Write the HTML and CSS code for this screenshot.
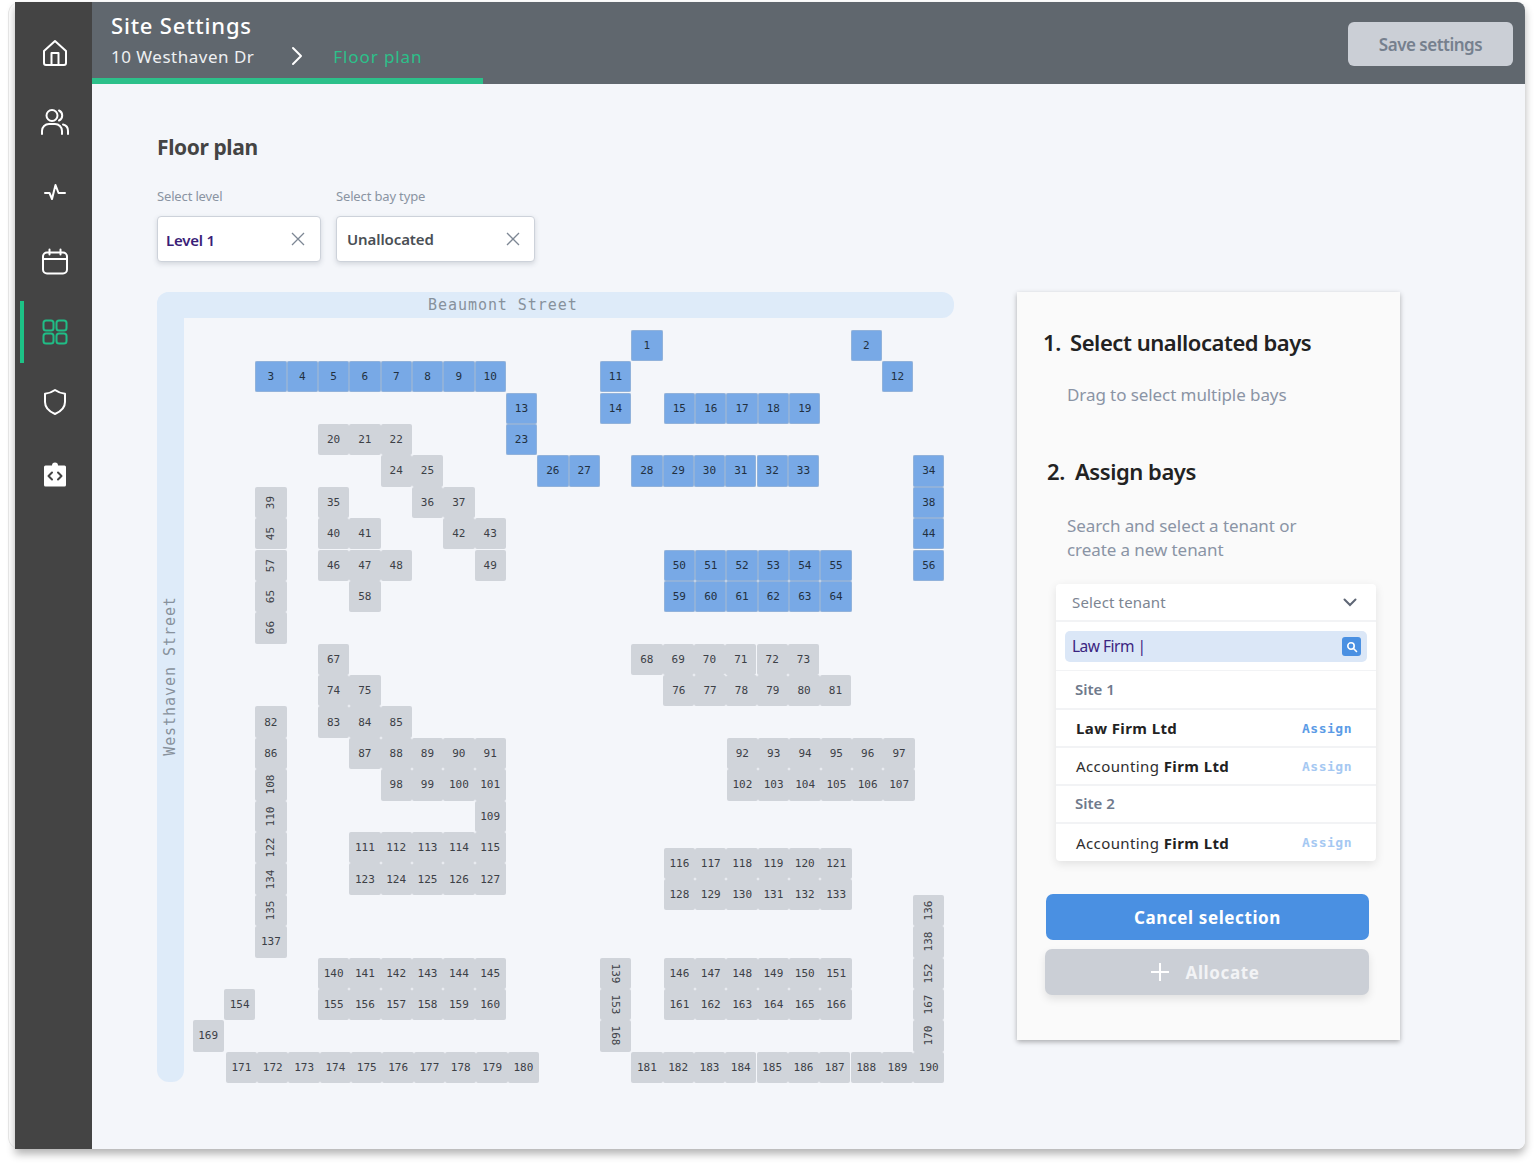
FILE: index.html
```html
<!DOCTYPE html>
<html lang="en">
<head>
<meta charset="UTF-8">
<meta name="viewport" content="width=device-width, initial-scale=1.0">
<title>Site Settings - Floor plan</title>
<link rel="stylesheet" href="styles.css">
</head>
<body>
<div class="frame">
  <div class="app">
    <nav class="sidebar">
      <a class="nav-item home">
        <svg viewBox="0 0 26 28" width="26" height="28"><path d="M2 12 13 2l11 10v12a2 2 0 0 1-2 2H4a2 2 0 0 1-2-2z"/><path d="M9.500 26V14h7v12"/></svg>
      </a>
      <a class="nav-item">
        <svg viewBox="0 0 30 28" width="30" height="28"><circle cx="12" cy="7.500" r="5.500"/><path d="M2 26v-3a7 7 0 0 1 7-7h6a7 7 0 0 1 7 7v3"/><path d="M19 2.500a5.500 5.500 0 0 1 0 10"/><path d="M23 16.500a6.500 6.500 0 0 1 5 6.500v3"/></svg>
      </a>
      <a class="nav-item">
        <svg viewBox="0 0 24 18" width="24" height="18"><path d="M2 10h4.500l2.500 6 3.500-14 3 8h6.500"/></svg>
      </a>
      <a class="nav-item">
        <svg viewBox="0 0 28 28" width="28" height="28"><rect x="2" y="4.500" width="24" height="21" rx="4"/><path d="M2 11h24M8.500 1.500v5M19.500 1.500v5"/></svg>
      </a>
      <a class="nav-item active">
        <svg viewBox="0 0 26 26" width="26" height="26"><rect x="1.500" y="1.500" width="10" height="10" rx="2.500"/><rect x="14.500" y="1.500" width="10" height="10" rx="2.500"/><rect x="1.500" y="14.500" width="10" height="10" rx="2.500"/><rect x="14.500" y="14.500" width="10" height="10" rx="2.500"/></svg>
      </a>
      <a class="nav-item">
        <svg viewBox="0 0 24 28" width="24" height="28"><path d="M12 2c3 2.200 6 3.300 10 3.700V14c0 5.500-4 9.500-10 12C6 23.500 2 19.500 2 14V5.700C6 5.300 9 4.200 12 2z"/></svg>
      </a>
      <a class="nav-item code">
        <svg viewBox="0 0 22 25" width="22" height="25"><path class="solid" d="M1.500 3.500H8a3 3 0 0 1 6 0h6.500a1.500 1.500 0 0 1 1.500 1.500v18a1.500 1.500 0 0 1-1.500 1.500h-19A1.500 1.500 0 0 1 0 23V5a1.500 1.500 0 0 1 1.500-1.500z"/><path class="cut" d="M8 10.500 4.500 14 8 17.500M14 10.500l3.500 3.500-3.500 3.500"/></svg>
      </a>
    </nav>

    <div class="page">
      <header class="topbar">
        <div class="crumbs">
          <div class="site-title">Site Settings</div>
          <div class="crumb-line">
            <span class="crumb">10 Westhaven Dr</span>
            <svg class="crumb-arrow" viewBox="0 0 12 20" width="12" height="20"><path d="M2 2l8 8-8 8"/></svg>
            <span class="crumb current">Floor plan</span>
          </div>
        </div>
        <button class="save-button">Save settings</button>
      </header>

      <main class="content">
        <h1>Floor plan</h1>
        <div class="filters">
          <div class="filter">
            <label>Select level</label>
            <div class="select level-select">
              <span class="level-value">Level 1</span>
              <svg viewBox="0 0 16 16" width="16" height="16"><path d="M2 2l12 12M14 2 2 14"/></svg>
            </div>
          </div>
          <div class="filter">
            <label>Select bay type</label>
            <div class="select type-select">
              <span class="type-value">Unallocated</span>
              <svg viewBox="0 0 16 16" width="16" height="16"><path d="M2 2l12 12M14 2 2 14"/></svg>
            </div>
          </div>
        </div>

        <div class="plan-row">
          <div class="map" id="map">
            <div class="street street-top">Beaumont Street</div>
            <div class="street street-left"><span>Westhaven Street</span></div>
          </div>

          <aside class="panel">
            <h2 class="step-one"><span>1.</span> Select unallocated bays</h2>
            <p class="hint hint-one">Drag to select multiple bays</p>
            <h2 class="step-two"><span>2.</span> Assign bays</h2>
            <p class="hint hint-two">Search and select a tenant or<br>create a new tenant</p>

            <div class="tenant-box">
              <div class="tenant-select">
                <span>Select tenant</span>
                <svg viewBox="0 0 14 9" width="14" height="9"><path d="M1.500 1.500 7 7l5.500-5.500"/></svg>
              </div>
              <div class="search-row">
                <div class="search-input">
                  <span class="search-text">Law Firm |</span>
                  <span class="search-icon">
                    <svg viewBox="0 0 12 12" width="12" height="12"><circle cx="5" cy="5" r="3.200"/><path d="M7.500 7.500 10.500 10.500"/></svg>
                  </span>
                </div>
              </div>
              <div class="tenant-row site-row first">Site 1</div>
              <div class="tenant-row"><span class="name"><b>Law Firm Ltd</b></span><a class="assign strong">Assign</a></div>
              <div class="tenant-row"><span class="name">Accounting <b>Firm Ltd</b></span><a class="assign">Assign</a></div>
              <div class="tenant-row site-row">Site 2</div>
              <div class="tenant-row last"><span class="name">Accounting <b>Firm Ltd</b></span><a class="assign">Assign</a></div>
            </div>

            <button class="wide-button cancel">Cancel selection</button>
            <button class="wide-button allocate">
              <svg viewBox="0 0 20 20" width="20" height="20"><path d="M10 1v18M1 10h18"/></svg>
              Allocate
            </button>
          </aside>
        </div>
      </main>
    </div>
  </div>
</div>
<script src="map.js"></script>
</body>
</html>
```

FILE: styles.css
```css
* {
  box-sizing: border-box;
}
body {
  margin: 0;
  background-color: #fff;
  font-family: 'Noto Sans', sans-serif;
  color: #444;
}
.frame {
  margin: 2px 9px 17px 8px;
  padding-left: 6px;
  border-left: 1px solid #e8e8e8;
  border-radius: 12px 0 0 12px;
}
.app {
  display: flex;
  height: 1147px;
  border-radius: 0 8px 8px 0;
  overflow: hidden;
  box-shadow: 0 5px 8px rgba(0, 0, 0, 0.3);
}

/* sidebar */
.sidebar {
  width: 77px;
  flex: none;
  padding: 15px 0 0 3px;
  background-color: #444;
}
.nav-item {
  position: relative;
  display: flex;
  height: 70px;
  align-items: center;
  justify-content: center;
}
.nav-item.home svg {
  margin-top: 2px;
}
.nav-item.code svg {
  margin-top: 4px;
}
.nav-item svg {
  fill: none;
  stroke: #fff;
  stroke-width: 2;
  stroke-linecap: round;
  stroke-linejoin: round;
}
.nav-item .solid {
  fill: #fff;
  stroke: none;
}
.nav-item .cut {
  stroke: #444;
  stroke-width: 2;
}
.nav-item.active svg {
  stroke: #20bd86;
}
.nav-item.active::before {
  content: '';
  position: absolute;
  left: 2px;
  top: 4px;
  width: 4px;
  height: 62px;
  background-color: #1dc286;
}

/* top bar */
.page {
  flex: 1;
  display: flex;
  flex-direction: column;
  min-width: 0;
}
.topbar {
  display: flex;
  height: 82px;
  flex: none;
  align-items: flex-start;
  justify-content: space-between;
  padding-right: 12px;
  background-color: #60676e;
}
.crumbs {
  width: 391px;
  height: 82px;
  padding: 8px 0 0 19px;
  border-bottom: 6px solid #2cc08a;
}
.site-title {
  font-size: 22px;
  line-height: 30px;
  font-weight: 500;
  letter-spacing: 0.8px;
  color: #fff;
}
.crumb-line {
  display: flex;
  align-items: center;
  margin-top: 3px;
  height: 26px;
}
.crumb {
  font-size: 17px;
  letter-spacing: 0.5px;
  color: #eef0f2;
}
.crumb.current {
  letter-spacing: 0.9px;
  color: #2cc08a;
}
.crumb-arrow {
  margin: 0 30px 0 37px;
  fill: none;
  stroke: #fff;
  stroke-width: 2;
  stroke-linecap: round;
  stroke-linejoin: round;
}
.save-button {
  width: 165px;
  height: 44px;
  margin-top: 20px;
  border: none;
  border-radius: 6px;
  background-color: #cbcfd6;
  color: #76808e;
  font-family: inherit;
  font-size: 17px;
  font-weight: 600;
  letter-spacing: -0.5px;
}

/* floor plan page */
.content {
  flex: 1;
  padding: 48px 0 0 65px;
  background-color: #f4f6fa;
}
h1 {
  margin: 0;
  font-size: 21px;
  line-height: 30px;
  font-weight: 700;
  letter-spacing: -0.4px;
  color: #444;
}
.filters {
  display: flex;
  gap: 15px;
  margin-top: 25px;
}
.filter label {
  display: block;
  font-size: 13px;
  line-height: 18px;
  letter-spacing: -0.15px;
  color: #8a94a2;
}
.select {
  display: flex;
  height: 46px;
  margin-top: 11px;
  align-items: center;
  justify-content: space-between;
  padding: 0 14px 0 8px;
  border: 1px solid #cdd2da;
  border-radius: 4px;
  background-color: #fff;
  box-shadow: 0 2px 5px rgba(60, 70, 90, 0.18);
}
.select svg {
  fill: none;
  stroke: #7d8794;
  stroke-width: 1.3;
}
.level-select {
  width: 164px;
}
.type-select {
  width: 199px;
  padding-left: 10px;
  padding-right: 13px;
}
.level-value {
  margin-top: 2px;
  font-size: 15px;
  font-weight: 600;
  letter-spacing: -0.2px;
  color: #3a1e78;
}
.type-value {
  font-size: 15px;
  font-weight: 600;
  letter-spacing: -0.1px;
  color: #4a4f55;
}
.plan-row {
  display: flex;
  gap: 63px;
  margin-top: 30px;
}

/* map canvas */
.map {
  position: relative;
  width: 797px;
  height: 790px;
  flex: none;
  font-family: 'DejaVu Sans Mono', monospace;
}
.street {
  position: absolute;
  background-color: #deebf9;
  color: #87919c;
}
.street-top {
  left: 0;
  top: 0;
  width: 797px;
  height: 26px;
  padding-left: 271px;
  border-radius: 12px 12px 12px 0;
  font-size: 15px;
  line-height: 27px;
  letter-spacing: 0.95px;
}
.street-left {
  left: 0;
  top: 0;
  width: 27px;
  height: 790px;
  border-radius: 12px 0 12px 12px;
  font-size: 15px;
  letter-spacing: 0.95px;
}
.street-left span {
  position: absolute;
  left: 13px;
  top: 384px;
  white-space: nowrap;
  transform: translate(-50%, -50%) rotate(-90deg);
}
.bay {
  position: absolute;
  display: flex;
  width: 31.400px;
  height: 31.400px;
  align-items: center;
  justify-content: center;
  border-radius: 2px;
  background-color: #d0d4da;
  color: #3c4046;
  font-size: 11px;
}
.bay.allocated {
  background-color: #78a9e6;
  box-shadow: inset 0 0 0 0.5px #a9bbd0;
  color: #22303f;
}
.bay.up span {
  transform: rotate(-90deg);
}
.bay.down span {
  transform: rotate(90deg);
}

/* allocate panel */
.panel {
  width: 383px;
  height: 748px;
  flex: none;
  padding: 35px 24px 0 26px;
  background-color: #fafafa;
  box-shadow: 0 2px 5px rgba(0, 0, 0, 0.3);
}
.panel h2 {
  margin: 0;
  font-size: 22px;
  line-height: 30px;
  font-weight: 600;
  letter-spacing: -0.45px;
  color: #222;
}
.panel h2 span {
  margin-right: 4px;
}
.step-two {
  padding-left: 4px;
}
.hint {
  margin: 0;
  padding-left: 24px;
  font-size: 17px;
  line-height: 24px;
  letter-spacing: -0.08px;
  color: #8a94a5;
}
.hint-one {
  margin-top: 26px;
}
.panel .step-two {
  margin-top: 49px;
}
.panel .step-two span {
  margin-right: 5px;
}
.hint-two {
  margin-top: 28px;
}
.tenant-box {
  width: 320px;
  margin: 22px 0 0 13px;
  border-radius: 4px;
  background-color: #fff;
  box-shadow: 0 3px 10px rgba(0, 0, 0, 0.1);
}
.tenant-select {
  display: flex;
  height: 38px;
  align-items: center;
  justify-content: space-between;
  padding: 0 19px 0 16px;
  border-bottom: 2px solid #f2f3f5;
  font-size: 15px;
  letter-spacing: 0.15px;
  color: #7c8592;
}
.tenant-select svg {
  fill: none;
  stroke: #5e6675;
  stroke-width: 2;
  stroke-linecap: round;
}
.search-row {
  height: 49px;
  padding: 9px 9px 0;
  border-bottom: 1px solid #f2f3f5;
}
.search-input {
  display: flex;
  height: 31px;
  align-items: center;
  justify-content: space-between;
  padding: 0 6px 0 7px;
  border-radius: 5px;
  background-color: #dbe7f7;
  font-size: 15.500px;
  letter-spacing: -0.5px;
  color: #3a2480;
}
.search-text {
  margin-top: -2px;
}
.search-icon {
  display: flex;
  width: 19px;
  height: 19px;
  align-items: center;
  justify-content: center;
  border-radius: 3px;
  background-color: #4a90e2;
}
.search-icon svg {
  fill: none;
  stroke: #fff;
  stroke-width: 1.6;
  stroke-linecap: round;
}
.tenant-row {
  display: flex;
  height: 38px;
  align-items: center;
  justify-content: space-between;
  padding: 0 24px 0 20px;
  border-bottom: 2px solid #f2f3f5;
  font-size: 15px;
  letter-spacing: 0.4px;
  color: #2e2e2e;
}
.tenant-row.first {
  height: 39px;
}
.tenant-row.last {
  height: 37px;
  border-bottom: none;
}
.tenant-row b {
  font-weight: 700;
  color: #222;
}
.site-row {
  padding-left: 19px;
  padding-bottom: 2px;
  font-weight: 600;
  letter-spacing: 0;
  color: #6f7a8c;
}
.assign {
  font-size: 13px;
  font-weight: 600;
  font-family: 'DejaVu Sans Mono', monospace;
  letter-spacing: 0.5px;
  color: #a5c8f2;
}
.assign.strong {
  color: #5b9be6;
}
.wide-button {
  display: flex;
  width: 323px;
  height: 46px;
  align-items: center;
  justify-content: center;
  gap: 16px;
  margin-left: 3px;
  border: none;
  border-radius: 7px;
  font-family: inherit;
  font-size: 17px;
  font-weight: 700;
  letter-spacing: 0.6px;
  color: #fff;
}
.cancel {
  margin-top: 33px;
  background-color: #4a90e2;
}
.allocate {
  width: 324px;
  margin-top: 9px;
  margin-left: 2px;
  padding-right: 11px;
  background-color: #cbcfd6;
  box-shadow: 0 4px 8px rgba(0, 0, 0, 0.1);
  color: #f2f3f5;
}
.allocate svg {
  fill: none;
  stroke: #fff;
  stroke-width: 2;
}
```

FILE: map.js
```js
// bays: centre of column 0 / row 0, measured from the map's top left corner
const COL_PITCH = 31.33;
const ROW_PITCH = 31.39;
const COL_ZERO = 113.7;
const ROW_ZERO = 53.25;

const map = document.getElementById('map');

function addBay(col, row, label, kind, turn) {
  const bay = document.createElement('div');
  bay.className = 'bay ' + (kind === 'b' ? 'allocated ' : '') + (turn || '');
  bay.style.left = (COL_ZERO + col * COL_PITCH - 15.5).toFixed(1) + 'px';
  bay.style.top = (ROW_ZERO + row * ROW_PITCH - 15.5).toFixed(1) + 'px';
  bay.innerHTML = '<span>' + label + '</span>';
  map.appendChild(bay);
}

// a run of bays with numbers following on: col, row, first, last, kind
function run(col, row, first, last, kind) {
  for (let n = first; n <= last; n++) {
    addBay(col + n - first, row, n, kind);
  }
}

run(12, 0, 1, 1, 'b');
run(19, 0, 2, 2, 'b');
run(0, 1, 3, 10, 'b');
run(11, 1, 11, 11, 'b');
run(20, 1, 12, 12, 'b');
run(8, 2, 13, 13, 'b');
run(11, 2, 14, 14, 'b');
run(13.04, 2, 15, 19, 'b');
run(2, 3, 20, 22);
run(8, 3, 23, 23, 'b');
run(4, 4, 24, 25);
run(9, 4, 26, 27, 'b');
run(12, 4, 28, 33, 'b');
run(21, 4, 34, 34, 'b');
run(2, 5, 35, 35);
run(5, 5, 36, 37);
run(21, 5, 38, 38, 'b');
run(2, 6, 40, 41);
run(6, 6, 42, 43);
run(21, 6, 44, 44, 'b');
run(2, 7, 46, 48);
run(7, 7, 49, 49);
run(13.04, 7, 50, 55, 'b');
run(21, 7, 56, 56, 'b');
run(3, 8, 58, 58);
run(13.04, 8, 59, 64, 'b');
run(2, 10, 67, 67);
run(12, 10, 68, 73);
run(2, 11, 74, 75);
run(13.02, 11, 76, 81);
run(0, 12, 82, 82);
run(2, 12, 83, 85);
run(0, 13, 86, 86);
run(3, 13, 87, 91);
run(15.05, 13, 92, 97);
run(4, 14, 98, 101);
run(15.05, 14, 102, 107);
run(7, 15, 109, 109);
run(3, 16, 111, 115);
run(13.04, 16.5, 116, 121);
run(3, 17, 123, 127);
run(13.04, 17.5, 128, 133);
run(0, 19, 137, 137);
run(2, 20, 140, 145);
run(13.04, 20, 146, 151);
run(-1, 21, 154, 154);
run(2, 21, 155, 160);
run(13.04, 21, 161, 166);
run(-2, 22, 169, 169);
run(-0.94, 23, 171, 180);
run(12, 23, 181, 190);

// turned labels down the left column
[[5, 39], [6, 45], [7, 57], [8, 65], [9, 66], [14, 108], [15, 110], [16, 122], [17, 134], [18, 135]]
  .forEach(b => addBay(0, b[0], b[1], '', 'up'));
// right hand column
[[18, 136], [19, 138], [20, 152], [21, 167], [22, 170]]
  .forEach(b => addBay(21, b[0], b[1], '', 'up'));
// middle stack reads top to bottom
[[20, 139], [21, 153], [22, 168]]
  .forEach(b => addBay(11, b[0], b[1], '', 'down'));
```
